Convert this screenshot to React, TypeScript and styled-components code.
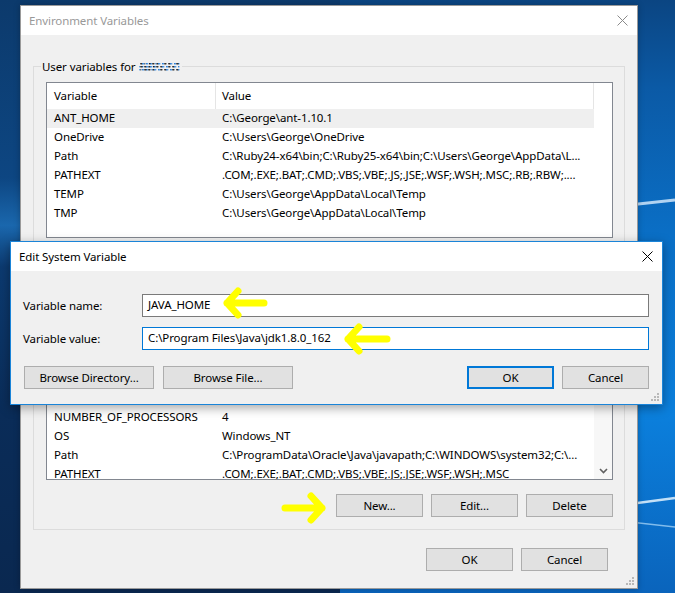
import React from "react";
import styled, { createGlobalStyle } from "styled-components";

const GlobalStyle = createGlobalStyle`
  html, body { margin: 0; padding: 0; width: 675px; height: 593px; overflow: hidden; }
  body { font-family: "Noto Sans", "Open Sans", Arial, sans-serif; }
  * { box-sizing: border-box; }
`;

const FONT = `"Noto Sans", "Open Sans", "Liberation Sans", sans-serif`;

const Desktop = styled.div`
  position: relative;
  width: 675px;
  height: 593px;
  overflow: hidden;
  background: #0b3263;
  font-family: ${FONT};
  font-size: 11.5px;
  letter-spacing: -0.1px;
  color: #000;
`;

const Wallpaper = styled.svg`
  position: absolute;
  inset: 0;
`;

const Window = styled.div<{ $left: number; $top: number; $w: number; $h: number; $active?: boolean }>`
  position: absolute;
  left: ${(p) => p.$left}px;
  top: ${(p) => p.$top}px;
  width: ${(p) => p.$w}px;
  height: ${(p) => p.$h}px;
  background: #f0f0f0;
  border: 1px solid ${(p) => (p.$active ? "#1a84d8" : "#9a9a9a")};
  box-shadow: ${(p) => (p.$active ? "0 3px 10px rgba(0,0,0,0.35)" : "0 0 6px rgba(0,0,0,0.25)")};
  display: flex;
  flex-direction: column;
`;

const TitleBar = styled.div<{ $active?: boolean }>`
  height: 29px;
  flex: none;
  background: #fff;
  display: flex;
  align-items: center;
  padding-left: 8px;
  padding-bottom: 1px;
  color: ${(p) => (p.$active ? "#000" : "#999")};
`;

const TitleText = styled.span`
  flex: 1;
`;

const CloseBox = styled.div`
  width: 30px;
  height: 28px;
  display: flex;
  align-items: center;
  justify-content: center;
`;

const MainBody = styled.div`
  flex: 1;
  display: flex;
  flex-direction: column;
  padding: 0 12px;
  position: relative;
`;

const GroupBox = styled.div<{ $mt: number }>`
  margin-top: ${(p) => p.$mt}px;
  border: 1px solid #dcdcdc;
  padding: 0 11px 12px 12px;
  display: flex;
  flex-direction: column;
`;

const GroupTitle = styled.div`
  align-self: flex-start;
  margin: -9px 0 0 -5px;
  padding: 0 1px;
  height: 16px;
  line-height: 15px;
  background: #f0f0f0;
  display: flex;
  align-items: center;
  gap: 3px;
  white-space: nowrap;
`;

const ListView = styled.div`
  margin-top: 8px;
  height: 156px;
  border: 1px solid #828790;
  background: #fff;
  display: flex;
  overflow: hidden;
`;

const ListContent = styled.div`
  flex: 1;
  display: flex;
  flex-direction: column;
  overflow: hidden;
`;

const HeaderRow = styled.div`
  height: 26px;
  flex: none;
  display: grid;
  grid-template-columns: 169px 378px;
`;

const HeaderCell = styled.div<{ $pl: number }>`
  border-right: 1px solid #e5e5e5;
  padding-left: ${(p) => p.$pl}px;
  line-height: 25px;
`;

const Row = styled.div<{ $selected?: boolean }>`
  height: 19px;
  flex: none;
  width: 547px;
  display: grid;
  grid-template-columns: 169px 378px;
  background: ${(p) => (p.$selected ? "#efefef" : "transparent")};
`;

const Cell = styled.div<{ $pl: number }>`
  padding-left: ${(p) => p.$pl}px;
  line-height: 18px;
  white-space: nowrap;
  overflow: hidden;
`;

const ScrollBar = styled.div`
  width: 18px;
  flex: none;
  background: #f7f7f7;
  display: flex;
  flex-direction: column;
  justify-content: flex-end;
  align-items: center;
`;

const ScrollArrow = styled.div`
  width: 17px;
  height: 17px;
  display: flex;
  align-items: center;
  justify-content: center;
`;

const ButtonRow = styled.div<{ $mt: number; $mr?: number }>`
  margin-top: ${(p) => p.$mt}px;
  margin-right: ${(p) => p.$mr ?? 0}px;
  display: flex;
  justify-content: flex-end;
  gap: 8px;
`;

const Button = styled.button<{ $w?: number; $default?: boolean }>`
  width: ${(p) => p.$w ?? 87}px;
  height: 23px;
  padding: 0 0 1px 0;
  background: #e1e1e1;
  border: 1px solid ${(p) => (p.$default ? "#0078d7" : "#adadad")};
  box-shadow: ${(p) => (p.$default ? "inset 0 0 0 1px #0078d7" : "none")};
  font-family: ${FONT};
  font-size: 11.5px;
  letter-spacing: -0.1px;
  color: #000;
  flex: none;
`;

const Grip = styled.div`
  position: absolute;
  right: 2px;
  bottom: 2px;
  display: flex;
`;

const DialogBody = styled.div`
  flex: 1;
  display: flex;
  flex-direction: column;
  padding: 23px 13px 14px 12px;
  gap: 10px;
  position: relative;
`;

const FieldRow = styled.div`
  display: grid;
  grid-template-columns: 119px 1fr;
  align-items: center;
`;

const FieldLabel = styled.span`
  padding-bottom: 1px;
`;

const TextBox = styled.div<{ $focused?: boolean }>`
  height: 23px;
  border: 1px solid ${(p) => (p.$focused ? "#0078d7" : "#7a7a7a")};
  background: #fff;
  padding-left: 5px;
  line-height: 20px;
  white-space: nowrap;
`;

const DialogButtons = styled.div`
  margin-top: 6px;
  margin-left: 1px;
  display: flex;
  gap: 9px;
`;

const Spacer = styled.div`
  flex: 1;
`;

const OkCancel = styled.div`
  display: flex;
  gap: 8px;
`;

const ArrowLayer = styled.svg`
  position: absolute;
  inset: 0;
  pointer-events: none;
`;

const CloseIcon = ({ color }: { color: string }) => (
  <svg width="11" height="11" viewBox="0 0 11 11">
    <path d="M0.5 0.5 L10.5 10.5 M10.5 0.5 L0.5 10.5" stroke={color} strokeWidth="1" fill="none" />
  </svg>
);

const GripIcon = () => (
  <svg width="9" height="9" viewBox="0 0 9 9">
    {[
      [6, 0],
      [6, 3],
      [3, 3],
      [6, 6],
      [3, 6],
      [0, 6],
    ].map(([x, y], i) => (
      <rect key={i} x={x} y={y} width="2" height="2" fill="#b8b8b8" />
    ))}
  </svg>
);

const Scribble = () => {
  const pts: [number, number, string][] = [];
  let s = 11;
  for (let i = 0; i < 90; i++) {
    s = (s * 9301 + 49297) % 233280;
    const x = s % 40;
    s = (s * 9301 + 49297) % 233280;
    const y = 2 + (s % 9);
    s = (s * 9301 + 49297) % 233280;
    const c = s % 4 === 0 ? "#1a1a1a" : s % 4 === 1 ? "#2f7fd6" : s % 4 === 2 ? "#6aa8e8" : "#555";
    pts.push([x, y, c]);
  }
  return (
    <svg width="42" height="12" viewBox="0 0 42 12">
      {pts.map(([x, y, c], i) => (
        <rect key={i} x={x} y={y} width="1.4" height="1.4" fill={c} />
      ))}
    </svg>
  );
};

const userVars: [string, string][] = [
  ["ANT_HOME", "C:\\George\\ant-1.10.1"],
  ["OneDrive", "C:\\Users\\George\\OneDrive"],
  ["Path", "C:\\Ruby24-x64\\bin;C:\\Ruby25-x64\\bin;C:\\Users\\George\\AppData\\L..."],
  ["PATHEXT", ".COM;.EXE;.BAT;.CMD;.VBS;.VBE;.JS;.JSE;.WSF;.WSH;.MSC;.RB;.RBW;...."],
  ["TEMP", "C:\\Users\\George\\AppData\\Local\\Temp"],
  ["TMP", "C:\\Users\\George\\AppData\\Local\\Temp"],
];

const sysVars: [string, string][] = [
  ["ComSpec", "C:\\WINDOWS\\system32\\cmd.exe"],
  ["DriverData", "C:\\Windows\\System32\\Drivers\\DriverData"],
  ["JAVA_HOME", "C:\\Program Files\\Java\\jdk1.8.0_162"],
  ["NUMBER_OF_PROCESSORS", "4"],
  ["OS", "Windows_NT"],
  ["Path", "C:\\ProgramData\\Oracle\\Java\\javapath;C:\\WINDOWS\\system32;C:\\..."],
  ["PATHEXT", ".COM;.EXE;.BAT;.CMD;.VBS;.VBE;.JS;.JSE;.WSF;.WSH;.MSC"],
];

const VarList = ({ rows, scroll }: { rows: [string, string][]; scroll?: boolean }) => (
  <ListView>
    <ListContent>
      <HeaderRow>
        <HeaderCell $pl={7}>Variable</HeaderCell>
        <HeaderCell $pl={6}>Value</HeaderCell>
      </HeaderRow>
      {rows.map(([k, v], i) => (
        <Row key={k + i} $selected={!scroll && i === 0}>
          <Cell $pl={7}>{k}</Cell>
          <Cell $pl={6}>{v}</Cell>
        </Row>
      ))}
    </ListContent>
    {scroll && (
      <ScrollBar>
        <ScrollArrow>
          <svg width="9" height="6" viewBox="0 0 9 6">
            <path d="M1 1 L4.5 4.5 L8 1" stroke="#606060" strokeWidth="1.6" fill="none" />
          </svg>
        </ScrollArrow>
      </ScrollBar>
    )}
  </ListView>
);

const Arrow = ({ d }: { d: string }) => (
  <path d={d} stroke="#ffff00" strokeWidth="7" strokeLinecap="round" strokeLinejoin="round" fill="none" />
);

export default function App() {
  return (
    <>
      <GlobalStyle />
      <Desktop>
        <Wallpaper width="675" height="593" viewBox="0 0 675 593">
          <defs>
            <linearGradient id="left" x1="0" y1="0" x2="0" y2="1">
              <stop offset="0" stopColor="#0c3a6c" />
              <stop offset="0.3" stopColor="#0d4682" />
              <stop offset="0.38" stopColor="#1a67ad" />
              <stop offset="0.45" stopColor="#0c3a70" />
              <stop offset="0.7" stopColor="#0a2c58" />
              <stop offset="1" stopColor="#0a2850" />
            </linearGradient>
            <linearGradient id="right" x1="0" y1="0" x2="0" y2="1">
              <stop offset="0" stopColor="#0b4582" />
              <stop offset="0.15" stopColor="#0b5aa6" />
              <stop offset="0.4" stopColor="#0a6fc6" />
              <stop offset="0.7" stopColor="#0b7fdc" />
              <stop offset="1" stopColor="#0a64bc" />
            </linearGradient>
          </defs>
          <rect x="0" y="0" width="340" height="593" fill="url(#left)" />
          <rect x="340" y="0" width="335" height="593" fill="url(#right)" />
          <path d="M620 206 L675 200" stroke="#cfe6fb" strokeWidth="3" opacity="0.85" />
          <path d="M630 504 L675 498" stroke="#d8ecfc" strokeWidth="2.5" opacity="0.9" />
          <path d="M630 522 L675 527" stroke="#9fd0f6" strokeWidth="1.5" opacity="0.8" />
        </Wallpaper>

        <Window $left={20} $top={5} $w={618} $h={584}>
          <TitleBar>
            <TitleText>Environment Variables</TitleText>
            <CloseBox>
              <CloseIcon color="#8a8a8a" />
            </CloseBox>
          </TitleBar>
          <MainBody>
            <GroupBox $mt={31}>
              <GroupTitle>
                User variables for <Scribble />
              </GroupTitle>
              <VarList rows={userVars} />
              <ButtonRow $mt={8}>
                <Button>New...</Button>
                <Button>Edit...</Button>
                <Button>Delete</Button>
              </ButtonRow>
            </GroupBox>
            <GroupBox $mt={26}>
              <GroupTitle>System variables</GroupTitle>
              <VarList rows={sysVars} scroll />
              <ButtonRow $mt={14}>
                <Button>New...</Button>
                <Button>Edit...</Button>
                <Button>Delete</Button>
              </ButtonRow>
            </GroupBox>
            <ButtonRow $mt={18} $mr={17}>
              <Button>OK</Button>
              <Button>Cancel</Button>
            </ButtonRow>
            <Grip>
              <GripIcon />
            </Grip>
          </MainBody>
        </Window>

        <Window $left={10} $top={241} $w={653} $h={164} $active>
          <TitleBar $active>
            <TitleText>Edit System Variable</TitleText>
            <CloseBox>
              <CloseIcon color="#000" />
            </CloseBox>
          </TitleBar>
          <DialogBody>
            <FieldRow>
              <FieldLabel>Variable name:</FieldLabel>
              <TextBox>JAVA_HOME</TextBox>
            </FieldRow>
            <FieldRow>
              <FieldLabel>Variable value:</FieldLabel>
              <TextBox $focused>C:\Program Files\Java\jdk1.8.0_162</TextBox>
            </FieldRow>
            <DialogButtons>
              <Button $w={130}>Browse Directory...</Button>
              <Button $w={130}>Browse File...</Button>
              <Spacer />
              <OkCancel>
                <Button $default>OK</Button>
                <Button>Cancel</Button>
              </OkCancel>
            </DialogButtons>
            <Grip>
              <GripIcon />
            </Grip>
          </DialogBody>
        </Window>

        <ArrowLayer width="675" height="593" viewBox="0 0 675 593">
          <Arrow d="M264 303 L227 303 M238 291 L227 303 L238 315" />
          <Arrow d="M387 339 L348 339 M359 327 L348 339 L359 351" />
          <Arrow d="M285 508 L322 508 M311 496 L322 508 L311 520" />
        </ArrowLayer>
      </Desktop>
    </>
  );
}
